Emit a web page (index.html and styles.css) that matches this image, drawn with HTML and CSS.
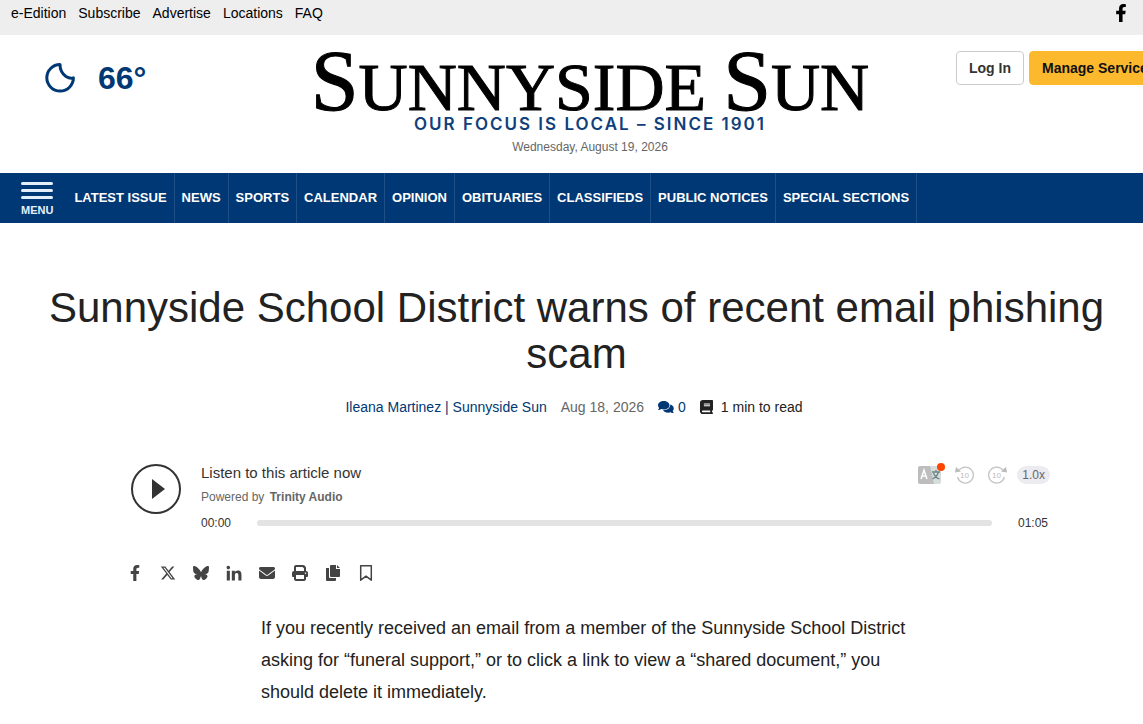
FILE: index.html
```
<!DOCTYPE html>
<html lang="en">
<head>
    <meta charset="UTF-8">
    <meta name="viewport" content="width=device-width, initial-scale=1.0">
    <title>Sunnyside School District warns of recent email phishing scam</title>
    <link rel="stylesheet" href="styles.css">
</head>
<body>
    <div class="topbar">
        <nav class="topbar-links">
            <a href="#">e-Edition</a>
            <a href="#">Subscribe</a>
            <a href="#">Advertise</a>
            <a href="#">Locations</a>
            <a href="#">FAQ</a>
        </nav>
        <a class="topbar-social" href="#" aria-label="Facebook">
            <svg width="12" height="18" viewBox="0 0 320 512"><path d="M279.14 288l14.22-92.66h-88.91v-60.13c0-25.35 12.42-50.06 52.24-50.06h40.42V6.26S260.43 0 225.36 0c-73.22 0-121.08 44.38-121.08 124.72v70.62H22.89V288h81.39v224h100.17V288z"/></svg>
        </a>
    </div>

    <header class="masthead">
        <a class="weather" href="#">
            <svg width="30" height="30" viewBox="0 0 30 30"><path d="M15 1.5A13.3 13.3 0 1 0 28.4 14.8C26 15.6 23.500 15 21 13.500 17.500 11 15 6.500 15 1.5z" fill="none" stroke="currentColor" stroke-width="3" stroke-linejoin="round"/></svg>
            <span>66°</span>
        </a>
        <div class="brand">
            <a class="logo" href="#"><span class="cap">S</span>UNNYSIDE <span class="cap">S</span>UN</a>
            <div class="tagline">OUR FOCUS IS LOCAL – SINCE 1901</div>
            <div class="today">Wednesday, August 19, 2026</div>
        </div>
        <div class="account">
            <button class="btn" type="button">Log In</button>
            <button class="btn btn-gold" type="button">Manage Services</button>
        </div>
    </header>

    <nav class="main-nav">
        <button class="menu" type="button">
            <svg width="32" height="17" viewBox="0 0 32 17"><path d="M1.5 1.5h29M1.5 8.5h29M1.5 15.5h29" fill="none" stroke="currentColor" stroke-width="3" stroke-linecap="round"/></svg>
            MENU
        </button>
        <a href="#">LATEST ISSUE</a>
        <a href="#">NEWS</a>
        <a href="#">SPORTS</a>
        <a href="#">CALENDAR</a>
        <a href="#">OPINION</a>
        <a href="#">OBITUARIES</a>
        <a href="#">CLASSIFIEDS</a>
        <a href="#">PUBLIC NOTICES</a>
        <a href="#">SPECIAL SECTIONS</a>
    </nav>

    <main>
        <h1>Sunnyside School District warns of recent email phishing scam</h1>
        <div class="meta">
            <a href="#">Ileana Martinez | Sunnyside Sun</a>
            <time datetime="2026-08-18">Aug 18, 2026</time>
            <a class="comments" href="#">
                <svg width="16" height="14" viewBox="0 0 16 14"><path d="M5.7 1C2.500 1 0 2.900 0 5.300c0 1 .4 1.900 1.100 2.600C.9 8.700.4 9.200.1 9.600c-.1.200 0 .4.200.4 1.200 0 2.100-.4 2.800-.9.800.3 1.700.5 2.600.5 3.200 0 5.800-1.900 5.800-4.300S8.900 1 5.700 1z"/><path d="M12.300 4.600c1.900.5 3.500 1.900 3.500 3.800 0 1-.4 1.900-1.100 2.600.2.800.7 1.300 1 1.700.1.200 0 .4-.2.400-1.200 0-2.100-.4-2.800-.9-.8.300-1.700.5-2.600.5-2.300 0-4.200-1-5.100-2.400 3.900.3 7.400-2 7.300-5.700z"/></svg>
                <span>0</span>
            </a>
            <span class="read-time">
                <svg width="13" height="14" viewBox="0 0 448 512" preserveAspectRatio="none"><path d="M96 0C43 0 0 43 0 96V416c0 53 43 96 96 96H384h32c17.700 0 32-14.300 32-32s-14.300-32-32-32V384c17.700 0 32-14.300 32-32V32c0-17.700-14.300-32-32-32H384 96zm0 384H352v64H96c-17.700 0-32-14.300-32-32s14.300-32 32-32zm32-240c0-8.800 7.200-16 16-16H336c8.800 0 16 7.200 16 16s-7.200 16-16 16H144c-8.800 0-16-7.200-16-16zm16 48H336c8.800 0 16 7.200 16 16s-7.200 16-16 16H144c-8.800 0-16-7.200-16-16s7.200-16 16-16z"/></svg>
                <span>1 min to read</span>
            </span>
        </div>

        <section class="player" aria-label="Audio player">
            <button class="play" type="button" aria-label="Play">
                <svg width="50" height="50" viewBox="0 0 50 50"><circle cx="25" cy="25" r="24" fill="none" stroke="currentColor" stroke-width="2"/><path d="M21 15v20l13-10z" fill="currentColor"/></svg>
            </button>
            <div class="player-main">
                <div class="player-head">
                    <div>
                        <div class="player-title">Listen to this article now</div>
                        <div class="powered">Powered by <a href="#">Trinity Audio</a></div>
                    </div>
                    <div class="player-tools">
                        <button class="translate" type="button" aria-label="Translate">
                            <svg width="27" height="24" viewBox="0 2 27 24"><path d="M2 5h12l4 18H2a2 2 0 0 1-2-2V7a2 2 0 0 1 2-2z" fill="#bdbdbd"/><path d="M12 5h9a2 2 0 0 1 2 2v14a2 2 0 0 1-2 2h-5z" fill="#d5dddd"/><path d="M3 18l3-9 3 9M4 15h4" fill="none" stroke="#fff" stroke-width="1.500"/><path d="M14 11h8M18 9v2M20.500 11c-1 3.500-3 5.500-6 7M15.500 12c1 3 3 5 6 6" fill="none" stroke="#6f8585" stroke-width="1.300"/><circle cx="23" cy="6" r="4" fill="#ff4500"/></svg>
                        </button>
                        <button type="button" aria-label="Back 10 seconds">
                            <svg width="19" height="18" viewBox="0 0 19 18"><path d="M4 4.200A8 8 0 1 1 2.600 11" fill="none" stroke="#c4c4c4" stroke-width="1.300"/><path d="M0 6.500L1 1l5 4.500z" fill="#bbb"/><text x="5" y="12">10</text></svg>
                        </button>
                        <button type="button" aria-label="Forward 10 seconds">
                            <svg width="19" height="18" viewBox="0 0 19 18"><path d="M15 4.200A8 8 0 1 0 16.400 11" fill="none" stroke="#c4c4c4" stroke-width="1.300"/><path d="M19 6.500L18 1l-5 4.500z" fill="#bbb"/><text x="4" y="12">10</text></svg>
                        </button>
                        <button class="speed" type="button">1.0x</button>
                    </div>
                </div>
                <div class="timeline">
                    <span>00:00</span>
                    <input type="range" min="0" max="65" value="0" aria-label="Seek">
                    <span>01:05</span>
                </div>
            </div>
        </section>

        <div class="share">
            <a href="#" aria-label="Facebook"><svg width="16" height="16" viewBox="-96 0 512 512"><path d="M279.14 288l14.22-92.66h-88.91v-60.13c0-25.35 12.42-50.06 52.24-50.06h40.42V6.26S260.43 0 225.36 0c-73.22 0-121.08 44.38-121.08 124.72v70.62H22.89V288h81.39v224h100.17V288z"/></svg></a>
            <a href="#" aria-label="X"><svg width="16" height="16" viewBox="0 0 512 512"><path d="M389.2 48h70.6L305.6 224.2 487 464H345L233.7 318.6 106.500 464H35.8L200.7 275.500 26.8 48H172.400L272.9 180.900 389.2 48zM364.400 421.800h39.100L151.100 88h-42L364.400 421.800z"/></svg></a>
            <a href="#" aria-label="Bluesky"><svg width="16" height="16" viewBox="0 0 24 24"><path d="M12 10.8c-1.087-2.114-4.046-6.053-6.798-7.995C2.566.944 1.561 1.266.902 1.565.139 1.908 0 3.08 0 3.768c0 .69.378 5.65.624 6.479.815 2.736 3.713 3.66 6.383 3.364-3.912.58-7.387 2.005-2.83 7.078 5.013 5.19 6.87-1.113 7.823-4.308.953 3.195 2.05 9.271 7.733 4.308 4.267-4.308 1.172-6.498-2.74-7.078 2.67.297 5.568-.628 6.383-3.364.246-.828.624-5.79.624-6.478 0-.69-.139-1.861-.902-2.206-.659-.298-1.664-.62-4.3 1.24C16.046 4.748 13.087 8.687 12 10.8z"/></svg></a>
            <a href="#" aria-label="LinkedIn"><svg width="16" height="16" viewBox="-16 -20 480 480"><path d="M100.28 448H7.4V148.9h92.88zM53.79 108.1C24.09 108.1 0 83.5 0 53.8a53.79 53.79 0 0 1 107.58 0c0 29.7-24.1 54.3-53.79 54.3zM447.9 448h-92.68V302.4c0-34.7-.7-79.2-48.29-79.2-48.29 0-55.69 37.7-55.69 76.7V448h-92.78V148.9h89.08v40.8h1.3c12.4-23.5 42.69-48.3 87.88-48.3 94 0 111.28 61.9 111.28 142.3V448z"/></svg></a>
            <a href="#" aria-label="Email"><svg width="16" height="16" viewBox="0 0 512 512"><path d="M48 64C21.500 64 0 85.500 0 112c0 15.100 7.100 29.300 19.200 38.400L236.800 313.600c11.400 8.500 27 8.500 38.400 0L492.800 150.400c12.100-9.100 19.200-23.300 19.200-38.400c0-26.500-21.500-48-48-48H48zM0 176V384c0 35.300 28.700 64 64 64H448c35.300 0 64-28.700 64-64V176L294.400 339.200c-22.800 17.100-54 17.100-76.800 0L0 176z"/></svg></a>
            <a href="#" aria-label="Print"><svg width="16" height="16" viewBox="0 0 512 512"><path d="M128 0C92.7 0 64 28.7 64 64v128c-35.300 0-64 28.700-64 64v96c0 17.700 14.300 32 32 32H64v64c0 35.300 28.700 64 64 64H384c35.300 0 64-28.700 64-64V384h32c17.700 0 32-14.300 32-32V256c0-35.300-28.700-64-64-64V93.300c0-17-6.700-33.300-18.700-45.300L400 18.700C388 6.700 371.700 0 354.700 0zM128 64H340L384 108V192H128zM128 320H384V448H128zM432 240a24 24 0 1 1 0 48 24 24 0 1 1 0-48z" fill-rule="evenodd"/></svg></a>
            <a href="#" aria-label="Copy"><svg width="16" height="16" viewBox="0 0 16 16"><path d="M6 0h5v4h4v7a1 1 0 0 1-1 1H6a1 1 0 0 1-1-1V1a1 1 0 0 1 1-1zM12 0l3 3h-3zM1 3h3v9a1 1 0 0 0 1 1h6v2a1 1 0 0 1-1 1H2a1 1 0 0 1-1-1z"/></svg></a>
            <a href="#" aria-label="Save"><svg width="16" height="16" viewBox="0 0 16 16"><path d="M2.700.8h10.600v14.400l-5.300-4-5.300 4z" fill="none" stroke="currentColor" stroke-width="1.500" stroke-linejoin="round"/></svg></a>
        </div>

        <article class="story">
            <p>If you recently received an email from a member of the Sunnyside School District asking for “funeral support,” or to click a link to view a “shared document,” you should delete it immediately.</p>
        </article>
    </main>
</body>
</html>
```

FILE: styles.css
```
* {
    box-sizing: border-box;
}

body {
    margin: 0;
    overflow-x: hidden;
    background-color: #fff;
    color: #222;
    font-family: "Liberation Sans", Arial, sans-serif;
    font-size: 14px;
    line-height: 20px;
}

a {
    color: #003875;
    text-decoration: none;
}

button {
    padding: 0;
    border: 0;
    background: none;
    color: inherit;
    font-family: inherit;
    cursor: pointer;
}

svg {
    display: block;
    fill: currentColor;
}

/* Top bar */
.topbar {
    display: flex;
    justify-content: space-between;
    padding: 3px 16px 12px 11px;
    background-color: #eee;
}

.topbar a {
    color: #000;
}

.topbar-links {
    display: flex;
    gap: 12px;
}

.topbar-social {
    padding-top: 1px;
}

/* Masthead */
.masthead {
    display: grid;
    grid-template-columns: 1fr 600px 1fr;
    align-items: start;
    padding: 16px 8px 16px 45px;
}

.weather {
    display: flex;
    align-items: center;
    gap: 23px;
    padding-top: 8px;
    font-size: 32px;
    font-weight: bold;
    line-height: 38px;
}

.brand {
    text-align: center;
}

.logo {
    display: block;
    color: #000;
    font-family: "Liberation Serif", "Times New Roman", serif;
    font-size: 68px;
    line-height: 60px;
    white-space: nowrap;
    -webkit-text-stroke: 1px #000;
}

.logo .cap {
    font-size: 86px;
}

.tagline {
    color: #10407c;
    font-family: Inter, sans-serif;
    font-size: 17px;
    font-weight: 600;
    letter-spacing: 2px;
    line-height: 14px;
}

.today {
    margin-top: 6px;
    color: #666;
    font-size: 12px;
}

.account {
    display: flex;
    gap: 5px;
    padding-left: 66px;
}

.btn {
    flex: none;
    padding: 6px 12px;
    border: 1px solid #ccc;
    border-radius: 4px;
    color: #333;
    font-size: 14px;
    font-weight: bold;
    line-height: 20px;
}

.btn-gold {
    border-color: #fdb92e;
    background-color: #fdb92e;
    color: #111;
}

/* Main navigation */
.main-nav {
    display: flex;
    height: 50px;
    padding-left: 21px;
    background-color: #003875;
    color: #fff;
}

.main-nav a {
    padding: 0 7px;
    border-right: 1px solid #1e4f86;
    color: #fff;
    font-size: 13px;
    font-weight: bold;
    line-height: 50px;
    white-space: nowrap;
}

.menu {
    display: flex;
    flex-direction: column;
    align-items: center;
    gap: 3px;
    margin-right: 14px;
    padding-top: 9px;
    color: #e3f0fb;
    font-size: 11px;
    font-weight: bold;
    line-height: 16px;
}

/* Article heading */
h1 {
    margin: 0;
    padding: 62px 30px 0 40px;
    font-size: 42px;
    font-weight: normal;
    line-height: 46px;
    text-align: center;
}

.meta {
    display: flex;
    justify-content: center;
    gap: 14px;
    margin-top: 20px;
    padding-left: 5px;
}

.meta time {
    color: #666;
}

.comments,
.read-time {
    display: flex;
    align-items: center;
    gap: 4px;
}

.read-time {
    gap: 8px;
}

/* Audio player */
.player {
    display: flex;
    gap: 20px;
    margin: 46px 93px 0 131px;
    color: #333;
}

.play {
    flex: none;
    align-self: flex-start;
    margin-top: 1px;
}

.player-main {
    flex: 1;
}

.player-head {
    display: flex;
    justify-content: space-between;
}

.player-title {
    font-size: 15px;
}

.powered {
    margin-top: 4px;
    color: #666;
    font-size: 12px;
}

.powered a {
    margin-left: 2px;
    color: #666;
    font-weight: bold;
}

.player-tools {
    display: flex;
    align-items: center;
    align-self: flex-start;
    gap: 14px;
}

.player-tools text {
    fill: #bbb;
    font-size: 8px;
}

.translate {
    margin-right: -4px;
}

.player-tools .speed {
    margin-left: -4px;
    padding: 0 5px;
    border-radius: 9px;
    background-color: #ebebf0;
    color: #666;
    font-size: 12px;
    line-height: 18px;
}

.timeline {
    display: flex;
    align-items: center;
    gap: 26px;
    margin-top: 6px;
    padding-right: 2px;
    font-size: 12px;
}

.timeline input {
    flex: 1;
    height: 6px;
    margin: 0;
    border-radius: 3px;
    background-color: #e3e3e3;
    appearance: none;
}

.timeline input::-webkit-slider-thumb {
    width: 1px;
    height: 6px;
    appearance: none;
}

/* Share links */
.share {
    display: flex;
    gap: 17px;
    margin: 32px 0 0 127px;
}

.share a {
    color: #444;
}

/* Story text */
.story {
    max-width: 660px;
    margin: 31px 0 0 261px;
    font-size: 18px;
    line-height: 32px;
}

.story p {
    margin: 0;
}
```
